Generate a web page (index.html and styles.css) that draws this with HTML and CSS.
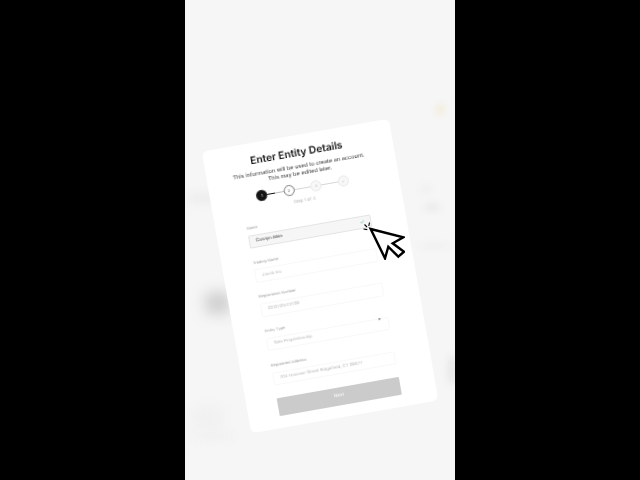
FILE: index.html
```html
<!DOCTYPE html>
<html lang="en">
<head>
<meta charset="utf-8">
<title>Enter Entity Details</title>
<link rel="stylesheet" href="styles.css">
</head>
<body>
<main class="stage">
  <div class="blob blob-gold"></div>
  <div class="blob blob-gray"></div>
  <div class="blob blob-band"></div>
  <div class="blob blob-left1"></div>
  <div class="blob blob-left2"></div>
  <div class="blob blob-right1"></div>
  <div class="blob blob-right2"></div>
  <div class="blob blob-right3"></div>
  <div class="blob blob-right4"></div>
  <section class="card">
    <h1 class="title">Enter Entity Details</h1>
    <p class="subtitle">This information will be used to create an account.<br>This may be edited later.</p>
    <div class="stepper">
      <span class="step step-active">1</span><span class="link link-dark"></span>
      <span class="step step-next">2</span><span class="link"></span>
      <span class="step step-off">3</span><span class="link"></span>
      <span class="step step-off">✓</span>
    </div>
    <p class="step-text">Step 1 of 4</p>
    <form class="fields">
      <div class="field">
        <span class="label">Name</span>
        <div class="input input-filled"><span>Carolyn Allen</span><span class="check">✓</span></div>
      </div>
      <div class="field">
        <span class="label">Trading Name</span>
        <div class="input"><span>Jacob Inc</span></div>
      </div>
      <div class="field">
        <span class="label">Registration Number</span>
        <div class="input"><span>2012/125417/06</span></div>
      </div>
      <div class="field">
        <span class="label">Entity Type</span>
        <div class="input"><span>Sole Proprietorship</span><span class="caret"></span></div>
      </div>
      <div class="field">
        <span class="label">Registered Address</span>
        <div class="input"><span>704 Hanover Street Ridgefield, CT 06877</span></div>
      </div>
      <div class="next">Next</div>
    </form>
  </section>
  <svg class="cursor" viewBox="0 0 50 50" width="50" height="50" aria-hidden="true">
    <path d="M15.7 19 L48.3 27.3 L37.7 33.3 L49 41.7 L43.3 46.7 L33.3 36.7 L30 48.3 Z" fill="#fff" stroke="#000" stroke-width="2.4" stroke-linejoin="miter"/>
    <path d="M14.5 12.5 L13.8 16 M9.5 14.5 L12 17 M8.5 19 L12.3 19.6" fill="none" stroke="#000" stroke-width="1.1"/>
  </svg>
</main>
</body>
</html>
```
FILE: styles.css
```css
* { box-sizing: border-box; margin: 0; padding: 0; }
html, body { width: 640px; height: 480px; background: #000; overflow: hidden; }
body { display: flex; justify-content: center; font-family: Inter, "Liberation Sans", sans-serif; text-rendering: geometricPrecision; }
.stage { position: relative; width: 270px; height: 480px; background: #f6f6f6; overflow: hidden; }
.blob { position: absolute; border-radius: 50%; }
.blob-gold { left: 251px; top: 104px; width: 9px; height: 11px; background: #f3ecd9; filter: blur(3px); }
.blob-gray { left: 20px; top: 292px; width: 26px; height: 22px; background: #cfcfcf; filter: blur(7px); border-radius: 25%; }
.blob-band { left: 0; top: 193px; width: 40px; height: 10px; background: #ececec; filter: blur(5px); }
.blob-left1 { left: 5px; top: 405px; width: 35px; height: 25px; background: #f1f1f1; filter: blur(5px); }
.blob-left2 { left: 5px; top: 432px; width: 45px; height: 8px; background: #f0f0f0; filter: blur(4px); }
.blob-right1 { left: 238px; top: 203px; width: 18px; height: 8px; background: #ebebeb; filter: blur(3px); }
.blob-right2 { left: 236px; top: 184px; width: 10px; height: 10px; background: #f0f0f0; filter: blur(3px); }
.blob-right3 { left: 234px; top: 243px; width: 30px; height: 6px; background: #efefef; filter: blur(3px); }
.blob-right4 { left: 262px; top: 355px; width: 12px; height: 30px; background: #e8e8e8; filter: blur(3px); }

.card {
  position: absolute; left: 39.5px; top: 132.5px;
  width: 190px; height: 285.5px;
  padding: 11.5px 35px 13px 31px;
  display: flex; flex-direction: column; align-items: center;
  background: #fff; border-radius: 6px;
  transform: rotate(-10deg);
  filter: blur(0.25px);
}
.title { font-size: 10.2px; line-height: 13px; font-weight: 600; color: #111; white-space: nowrap; }
.subtitle { margin-top: 4.25px; font-size: 5.6px; line-height: 7.5px; color: #333; text-align: center; white-space: nowrap; }
.stepper { margin-top: 4px; display: flex; align-items: center; height: 11px; }
.step { width: 11px; height: 11px; border-radius: 50%; display: flex; align-items: center; justify-content: center; font-size: 3.8px; flex: none; }
.step-active { background: #151515; color: #fff; }
.step-next { background: #fff; border: 0.5px solid #777; color: #555; }
.step-off { background: #f8f8f8; border: 0.5px solid #e6e6e6; color: #bbb; }
.link { width: 16.5px; height: 0.6px; background: #d6d6d6; flex: none; }
.link-dark { background: linear-gradient(to right, #111 45%, #bbb 45%); }
.step-text { margin-top: 4.3px; font-size: 4.4px; line-height: 7px; color: #bbb; }
.fields { margin-top: 9.7px; width: 124px; display: flex; flex-direction: column; gap: 10.5px; flex: 1; }
.field { display: flex; flex-direction: column; gap: 3.8px; }
.label { font-size: 3.9px; line-height: 7px; color: #a5a5a5; white-space: nowrap; }
.input { height: 13.5px; padding: 0 6px; display: flex; align-items: center; justify-content: space-between; font-size: 4.3px; color: #b8b8b8; border: 0.25px solid #f8f8f8; border-radius: 1px; white-space: nowrap; }
.input-filled { background: #f6f6f6; border-color: #e4e4e4; color: #333; }
.check { color: #7fc4a4; font-size: 6px; margin-right: -0.5px; }
.caret { width: 0; height: 0; border-left: 1.5px solid transparent; border-right: 1.5px solid transparent; border-top: 2.2px solid #444; margin: -11px 1px 0 0; }
.next { margin-top: 2px; height: 18px; display: flex; align-items: center; justify-content: center; background: #cbcbcb; color: #f2f2f2; font-size: 4.6px; font-weight: 600; border-radius: 1px; }
.cursor { position: absolute; left: 170px; top: 210px; }
```
